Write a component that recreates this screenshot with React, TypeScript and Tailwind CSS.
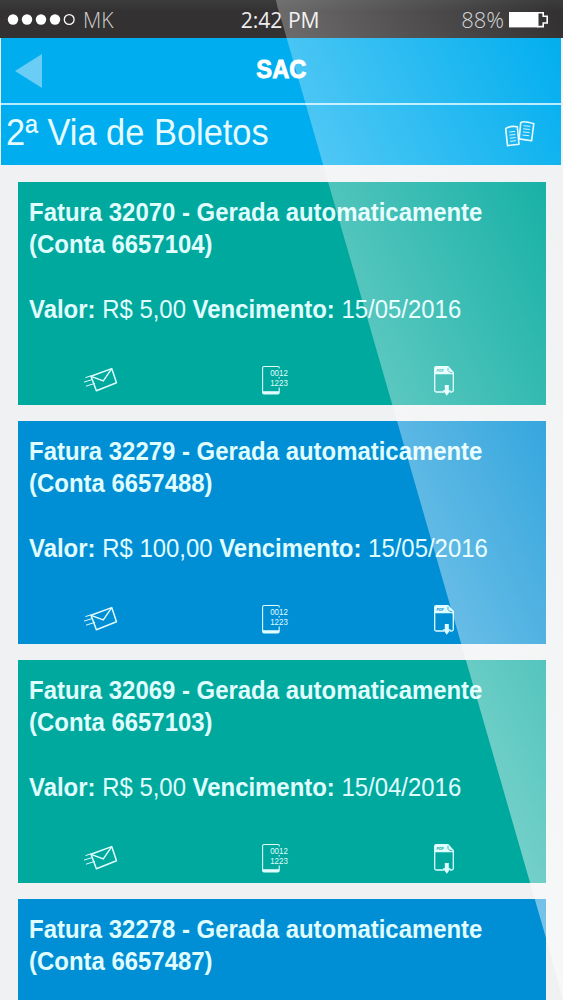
type Invoice = {
  id: string;
  account: string;
  amount?: string;
  due?: string;
};

const invoices: Invoice[] = [
  { id: "32070", account: "6657104", amount: "5,00", due: "15/05/2016" },
  { id: "32279", account: "6657488", amount: "100,00", due: "15/05/2016" },
  { id: "32069", account: "6657103", amount: "5,00", due: "15/04/2016" },
  { id: "32278", account: "6657487" },
];

const SendIcon = () => (
  <svg width="40" height="32" viewBox="0 0 40 32" fill="none" stroke="currentColor">
    <path d="M11 11.3 31.7 3.6 36.5 17.8 16.4 25.8Z" strokeWidth="1.5" strokeLinejoin="round" />
    <path d="M11 11.3 23.3 16 31.7 3.6" strokeWidth="1.4" />
    <path d="M5.5 12.6 11 10.8M4 17.1 13 14.3M6 21.2 15 18.3" strokeWidth="1" />
  </svg>
);

const BarcodeIcon = () => (
  <svg width="32" height="32" viewBox="0 0 32 32" fill="none" stroke="currentColor">
    <path d="M19.2 3.5V2.6Q19.2 1.5 18 1.5H4Q2.6 1.5 2.6 3V27.5Q2.6 29 4 29H17.8Q19.2 29 19.2 27.5V22.5M19.2 12V13.5" strokeWidth="1.1" />
    <path d="M3 27.6H19" strokeWidth="2.8" />
    <g fill="currentColor" stroke="none" fontFamily="Liberation Sans, sans-serif" fontSize="9.4">
      <text x="10.2" y="10.8" textLength="17.6" lengthAdjust="spacingAndGlyphs">0012</text>
      <text x="10.2" y="20.8" textLength="17.6" lengthAdjust="spacingAndGlyphs">1223</text>
    </g>
  </svg>
);

const PdfIcon = ({ ink }: { ink: string }) => (
  <svg width="24" height="32" viewBox="0 0 24 32" fill="none" stroke="currentColor">
    <path d="M12 27H4.2Q2.7 27 2.7 25.5V3.2Q2.7 1.7 4.2 1.7H16L21.3 7.5V25.5Q21.3 27 19.5 27H18" strokeWidth="1.3" />
    <path d="M2.7 9.3V3.2Q2.7 1.7 4.2 1.7H16L21.3 7.5V9.3Z" fill="currentColor" stroke="none" />
    <path d="M16 2.8V5.5Q16.8 7.6 20.5 7.8" stroke={ink} strokeWidth=".8" />
    <text x="4.4" y="6.6" fill={ink} stroke="none" fontFamily="Liberation Sans, sans-serif" fontWeight="bold" fontStyle="italic" fontSize="4" textLength="7.5" lengthAdjust="spacingAndGlyphs">PDF</text>
    <path d="M12.8 20H16.8V25.2H18.8L14.8 30.7 10.8 25.2H12.8Z" fill="currentColor" stroke="none" />
  </svg>
);

const PagesIcon = () => (
  <svg width="36" height="32" viewBox="0 0 36 32" fill="none" stroke="currentColor">
    <path d="M5.7 9.7Q9 6.6 17.3 7.7L19 25.3 7.5 26.6Z" strokeWidth="1.6" strokeLinejoin="round" />
    <path d="M20.7 3.8Q23 1.3 33.8 4.7L31.6 21.8 19.2 19.9Z" strokeWidth="1.6" strokeLinejoin="round" />
    <path d="M9.2 13 15 12.4M9.4 16.1 15.3 15.5M9.8 19.2 15.7 18.6M10 22.3 16 21.7M23.5 6.7 30.3 7.4M23.2 9.8 29.9 10.5M22.9 12.9 29.5 13.6M22.5 16 29.1 16.7" strokeWidth=".9" />
  </svg>
);

const StatusBar = () => (
  <div className="grid h-[38px] shrink-0 grid-cols-[1fr_auto_1fr] items-center bg-linear-to-b from-[#3d3c3c] to-[#333132] to-30% pb-px font-['Open_Sans',sans-serif] text-[22px] leading-none text-white">
    <div className="flex items-center pl-[7px]">
      <svg width="70" height="14" viewBox="0 0 70 14" fill="white">
        <circle cx="6" cy="7.5" r="5.2" />
        <circle cx="20" cy="7.5" r="5.2" />
        <circle cx="34" cy="7.5" r="5.2" />
        <circle cx="48" cy="7.5" r="5.2" />
        <circle cx="62.2" cy="7.5" r="4.9" fill="none" stroke="white" strokeWidth="1.3" />
      </svg>
      <span className="ml-[6px] origin-left scale-x-[.96] font-light text-[#d0d0d0]">MK</span>
    </div>
    <span className="relative -left-px scale-x-[.96] text-[#ededed]">2:42 PM</span>
    <div className="flex items-center justify-end pr-[14px]">
      <span className="mr-[5px] font-light text-[#d0d0d0]">88%</span>
      <svg width="40" height="18" viewBox="0 0 40 18" fill="none">
        <path d="M0 2H29.5V17.4H0Z" fill="white" />
        <path d="M28 2.8H34.2V6.3H38.2V13H34.2V16.6H28" stroke="white" strokeWidth="1.6" />
      </svg>
    </div>
  </div>
);

const Header = () => (
  <header className="mr-[2px] ml-px shrink-0 bg-[#00aeef]">
    <div className="grid h-[67px] grid-cols-3 items-center border-b-2 border-[#b5ecfd]">
      <svg className="ml-[13px]" width="30" height="36" viewBox="0 0 30 36">
        <path d="M1 18 28 1V35Z" fill="#6acdf6" />
      </svg>
      <h1 className="relative -top-px scale-x-[.91] text-center text-[26px] font-bold text-white [-webkit-text-stroke:.9px_white]">SAC</h1>
    </div>
    <div className="flex h-[60px] items-center justify-between pr-[25px] pl-[5px] text-[#e6fbff]">
      <h2 className="origin-left scale-x-[.93] pb-[6px] text-[37px] leading-none whitespace-nowrap">2ª Via de Boletos</h2>
      <PagesIcon />
    </div>
  </header>
);

const InvoiceCard = ({ invoice, green }: { invoice: Invoice; green: boolean }) => (
  <article className={`h-[223px] shrink-0 text-[#e0fdff] ${green ? "bg-[#00a99d]" : "bg-[#008fd5]"}`}>
    <div className="h-[183.5px] origin-left scale-x-[.92] pt-[14px] pl-3 text-[26px] leading-[32.5px] whitespace-nowrap">
      <p className="font-bold">Fatura {invoice.id} - Gerada automaticamente</p>
      <p className="font-bold">(Conta {invoice.account})</p>
      {invoice.amount && (
        <p className="mt-[32.5px]">
          <b>Valor:</b> R$ {invoice.amount} <b>Vencimento:</b> {invoice.due}
        </p>
      )}
    </div>
    {invoice.amount && (
      <div className="grid grid-cols-[181px_174px_1fr]">
        <div className="pl-[62px]"><SendIcon /></div>
        <div className="pl-[61px]"><BarcodeIcon /></div>
        <div className="pl-[59px]"><PdfIcon ink={green ? "#00a99d" : "#008fd5"} /></div>
      </div>
    )}
  </article>
);

// diagonal reflection over the whole screen
const Glare = () => (
  <svg className="pointer-events-none absolute inset-0" width="563" height="1000" viewBox="0 0 563 1000">
    <defs>
      <linearGradient id="glare" gradientUnits="userSpaceOnUse" x1="550" y1="0" x2="147" y2="198">
        <stop offset="0" stopColor="white" stopOpacity="0" />
        <stop offset="1" stopColor="white" stopOpacity=".5" />
      </linearGradient>
    </defs>
    <path d="M276 0Q277 7 280 15L546 938L563 1000V0Z" fill="url(#glare)" />
  </svg>
);

export default function App() {
  return (
    <div className="relative flex h-[1000px] w-[563px] flex-col overflow-hidden bg-[#eff1f2] font-['Liberation_Sans',Arial,sans-serif]">
      <StatusBar />
      <Header />
      <main className="flex flex-col gap-4 pt-[16.5px] pr-[17px] pl-[18px]">
        {invoices.map((invoice, i) => (
          <InvoiceCard key={invoice.id} invoice={invoice} green={i % 2 === 0} />
        ))}
      </main>
      <Glare />
    </div>
  );
}
